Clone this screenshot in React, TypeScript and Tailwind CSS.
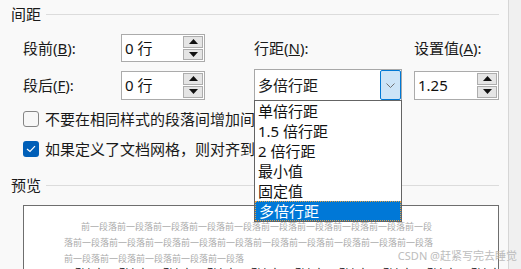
import React from "react";

const FONT = "font-['Noto_Sans','Noto_Sans_CJK_SC',sans-serif]";

const Arrow = ({ up }: { up?: boolean }) => (
  <svg width="9" height="5" viewBox="0 0 9 5">
    {up ? <path d="M0 5 L4.5 0 L9 5 Z" fill="#111" /> : <path d="M0 0 L4.5 5 L9 0 Z" fill="#111" />}
  </svg>
);

const Spinner = ({ value, className }: { value: string; className: string }) => (
  <div className={`flex border border-[#ababab] bg-white ${className}`}>
    <div className="flex flex-1 items-center pl-[3px] text-[15px] text-[#111]">{value}</div>
    <div className="flex w-[21px] flex-col gap-[1px] py-[1px] pr-[1px]">
      <div className="flex flex-1 items-center justify-center border border-[#adadad] bg-[#e5e5e5]">
        <Arrow up />
      </div>
      <div className="flex flex-1 items-center justify-center border border-[#adadad] bg-[#e5e5e5]">
        <Arrow />
      </div>
    </div>
  </div>
);

const Header = ({ title, className }: { title: string; className: string }) => (
  <div className={`flex h-[16px] items-center pr-[9px] ${className}`}>
    <span className="text-[15px] leading-none text-[#1a1a1a]">{title}</span>
    <div className="ml-[5px] h-px flex-1 bg-[#dcdcdc]" />
  </div>
);

const options = ["单倍行距", "1.5 倍行距", "2 倍行距", "最小值", "固定值", "多倍行距"];

export default function App() {
  const grey1 = "前一段落".repeat(9) + "前一段";
  const grey2 = "落" + "前一段落".repeat(10);
  const grey3 = "前一段落".repeat(5);

  return (
    <div className={`relative flex h-[269px] w-[521px] overflow-hidden bg-[#f9f9f9] text-[#1a1a1a] ${FONT}`}>
      <div className="flex w-[508px] flex-col pl-[11px]">
        <Header title="间距" className="mt-[6px]" />

        {/* row 1 */}
        <div className="mt-[12px] flex h-[28px] items-center pl-[12px] text-[15px]">
          <span className="w-[98px]">
            段前(<span className="underline">B</span>):
          </span>
          <Spinner value="0 行" className="h-[28px] w-[84px]" />
          <span className="ml-[49px] w-[160px]">
            行距(<span className="underline">N</span>):
          </span>
          <span>
            设置值(<span className="underline">A</span>):
          </span>
        </div>

        {/* row 2 */}
        <div className="mt-[7px] flex h-[32px] items-center pl-[12px] text-[15px]">
          <span className="w-[98px]">
            段后(<span className="underline">F</span>):
          </span>
          <Spinner value="0 行" className="h-[29px] w-[84px]" />
          <div className="relative z-10 ml-[49px] flex h-[32px] w-[148px] border border-[#a8a8a8] bg-white">
            <div className="flex flex-1 items-center pl-[3px]">多倍行距</div>
            <div className="flex w-[21px] items-center justify-center rounded-[2px] border border-[#0078d4] bg-[#cce4f7]">
              <svg width="9" height="5" viewBox="0 0 9 5">
                <path d="M0.5 0.5 L4.5 4.5 L8.5 0.5" fill="none" stroke="#707070" strokeWidth="1" />
              </svg>
            </div>
            <div className="absolute left-[-1px] top-full w-[148px] border border-[#646464] bg-white">
              {options.map((o, i) => (
                <div
                  key={o}
                  className={`flex h-[20px] items-center pl-[3px] leading-none ${
                    i === options.length - 1
                      ? "border border-dotted border-[#e8a040] bg-[#0078d7] pl-[2px] text-white"
                      : "text-[#111]"
                  }`}
                >
                  {o}
                </div>
              ))}
            </div>
          </div>
          <Spinner value="1.25" className="ml-[12px] h-[29px] w-[85px]" />
        </div>

        {/* checkboxes */}
        <div className="mt-[10px] flex h-[16px] items-center whitespace-nowrap pl-[12px] text-[15px]">
          <div className="h-[16px] w-[16px] rounded-[3px] border border-[#858585] bg-[#f7f7f7]" />
          <span className="ml-[6px]">不要在相同样式的段落间增加间距(C)</span>
        </div>
        <div className="mt-[14px] flex h-[16px] items-center whitespace-nowrap pl-[12px] text-[15px]">
          <div className="flex h-[16px] w-[16px] items-center justify-center rounded-[3px] bg-[#005fb8]">
            <svg width="10" height="8" viewBox="0 0 10 8">
              <path d="M1 4 L4 6.5 L9 1.2" fill="none" stroke="#fff" strokeWidth="1.2" />
            </svg>
          </div>
          <span className="ml-[6px]">如果定义了文档网格，则对齐到网格(W)</span>
        </div>

        <Header title="预览" className="mt-[20px]" />

        {/* preview */}
        <div className="ml-[12px] mt-[12px] w-[476px] flex-1 overflow-hidden border border-b-0 border-[#6e6e6e] bg-white pt-[13px] text-[9px] leading-[16px] text-[#ababab]">
          <div className="whitespace-nowrap pl-[57px]">{grey1}</div>
          <div className="whitespace-nowrap pl-[40px]">{grey2}</div>
          <div className="whitespace-nowrap pl-[40px]">{grey3}</div>
          <div className="flex whitespace-nowrap pl-[40px] text-[10px] leading-[12px] text-black">
            {Array.from({ length: 10 }).map((_, i) => (
              <span key={i} className="mr-[4px]">
                示例文字
              </span>
            ))}
          </div>
        </div>
      </div>

      {/* right strip */}
      <div className="w-[13px] border-l border-[#d6d6d6] bg-[#f0f0f0]" />

      <div className="absolute bottom-[6px] right-[4px] text-[11px] leading-[14px] text-[#bdbdbd]">
        CSDN @赶紧写完去睡觉
      </div>
    </div>
  );
}
